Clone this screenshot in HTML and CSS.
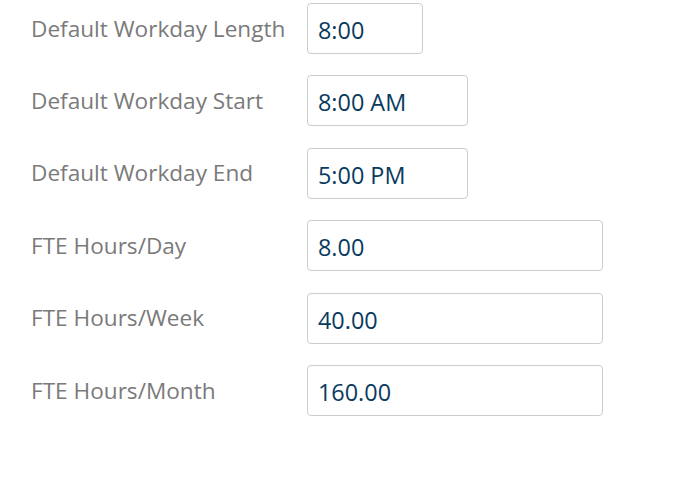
FILE: index.html
```html
<!DOCTYPE html>
<html>
<head>
<meta charset="utf-8">
<link rel="stylesheet" href="styles.css">
</head>
<body>
<form class="settings">
  <div class="row">
    <label class="label">Default Workday Length</label>
    <input class="field field-sm" type="text" value="8:00">
  </div>
  <div class="row">
    <label class="label">Default Workday Start</label>
    <input class="field field-md" type="text" value="8:00 AM">
  </div>
  <div class="row">
    <label class="label">Default Workday End</label>
    <input class="field field-md" type="text" value="5:00 PM">
  </div>
  <div class="row">
    <label class="label">FTE Hours/Day</label>
    <input class="field field-lg" type="text" value="8.00">
  </div>
  <div class="row">
    <label class="label">FTE Hours/Week</label>
    <input class="field field-lg" type="text" value="40.00">
  </div>
  <div class="row">
    <label class="label">FTE Hours/Month</label>
    <input class="field field-lg" type="text" value="160.00">
  </div>
</form>
</body>
</html>
```
FILE: styles.css
```css
html, body {
  margin: 0;
  padding: 0;
  background: #ffffff;
}
body {
  font-family: "Open Sans", "Liberation Sans", sans-serif;
}
.settings {
  display: flex;
  flex-direction: column;
  gap: 21.4px;
  padding: 3px 0 0 31px;
}
.row {
  display: grid;
  grid-template-columns: 276px auto;
  align-items: center;
  justify-items: start;
}
.label {
  font-size: 22.6px;
  color: #7a7a7a;
  line-height: 1;
  margin-top: 1px;
}
.field {
  box-sizing: border-box;
  height: 51px;
  margin: 0;
  padding: 3px 10px 0 10px;
  border: 1px solid #cccccc;
  border-radius: 4px;
  font-family: "Open Sans", "Liberation Sans", sans-serif;
  font-size: 23.4px;
  color: #0a3a5e;
  background: #ffffff;
  outline: none;
}
.field-sm { width: 116px; }
.field-md { width: 161px; }
.field-lg { width: 296px; }
```
